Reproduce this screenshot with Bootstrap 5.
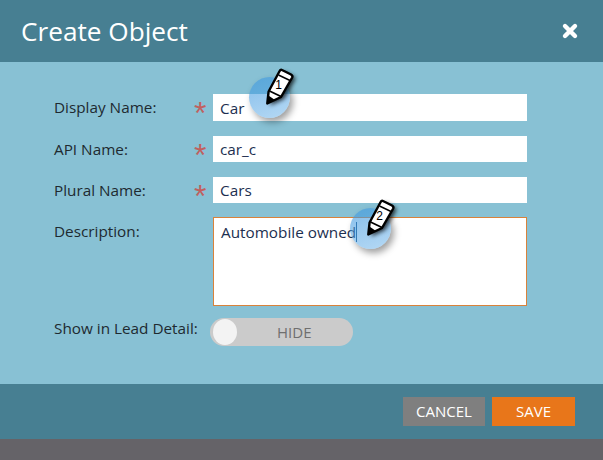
<!DOCTYPE html>
<html lang="en">
<head>
<meta charset="utf-8">
<title>Create Object</title>
<link href="https://cdn.jsdelivr.net/npm/bootstrap@5.3.0/dist/css/bootstrap.min.css" rel="stylesheet">
<style>
html,body{margin:0;height:460px;overflow:hidden;background:#656368;font-family:"Open Sans",sans-serif}
.dlg{position:relative;width:603px;height:439px;background:#88c1d4;color:#1e2a30}
.dlg-head{height:62px;background:#477f92;padding:0 24px 0 21px;color:#fff}
.dlg-title{font-size:26.2px;line-height:1;font-weight:400;margin:0}
.dlg-body{height:322px;padding:32px 0 0 54px}
.dlg-foot{height:55px;background:#477f92;padding:13px 28px 0 0;gap:7px}
.frow{height:27px;margin-bottom:15px}
.frow.r3{height:26px;margin-bottom:14px}
.frow.r2{height:26px;margin-bottom:15px}
.frow.r4{height:89px;margin-bottom:12px}
.frow.r4 .flabel{line-height:29px}
.flabel{width:139px;font-size:15.3px;line-height:27px;color:#1e2a30}
.req{width:20px;font-size:32px;line-height:38px;height:27px;color:#c0605f;font-family:"Liberation Sans",sans-serif;padding-left:1px}
.finput{width:314px;height:100%;border:0;border-radius:0;background:#fff;padding:0 7px;font-family:inherit;font-size:15.3px;color:#1c2f50;outline:0}
.farea{border:1px solid #d9823a;padding:4px 6px 4px 7px;line-height:20px}
.caret-mark{border-right:1px solid #1c4f80}
.tgl-label{width:156px;font-size:15.3px;line-height:21px}
.tgl{width:143px;height:28px;background:#cbcbcb;border-radius:14px}
.tgl-knob{width:24px;height:26px;margin:1px 0 1px 3px;background:#f3f3f3;border-radius:50%}
.tgl-text{font-size:15px;color:#6f6f6f;padding-left:40px}
.act{width:82px;height:29px;border:0;border-radius:0;color:#fff;font-size:15px;padding:0;line-height:29px;font-family:inherit}
.act-c{background:#7f7f7f}
.act-s{background:#e8761a;width:83px}
.act:hover{color:#fff}
.act-c:hover{background:#7f7f7f}
.act-s:hover{background:#e8761a}
.xbtn{width:18px;height:18px;display:block}
.pin{position:absolute;width:60px;height:70px;pointer-events:none}
.pin svg{position:relative;display:block;overflow:visible}
.pin-dot{position:absolute;left:0;top:10px;width:41px;height:41px;border-radius:50%;background:linear-gradient(160deg,rgba(60,150,222,.62),rgba(90,170,232,.45));box-shadow:3px 4px 7px rgba(0,0,0,.38)}
.pin-text{font-family:"Liberation Sans",sans-serif;font-size:12px;fill:#000}
.p1{left:249px;top:67px}
.p2{left:350px;top:198px}
</style>
</head>
<body>
<div class="dlg">
  <div class="dlg-head d-flex align-items-center justify-content-between">
    <h1 class="dlg-title">Create Object</h1>
    <svg class="xbtn" viewBox="0 0 18 18" aria-label="Close"><path d="M4 4 L14 14 M14 4 L4 14" stroke="#fff" stroke-width="4.4" stroke-linecap="round"/></svg>
  </div>
  <form class="dlg-body">
    <div class="frow d-flex">
      <div class="flabel">Display Name:</div><div class="req">*</div>
      <input class="finput" value="Car" aria-label="Display Name">
    </div>
    <div class="frow r2 d-flex">
      <div class="flabel">API Name:</div><div class="req">*</div>
      <input class="finput" value="car_c" aria-label="API Name">
    </div>
    <div class="frow r3 d-flex">
      <div class="flabel">Plural Name:</div><div class="req">*</div>
      <input class="finput" value="Cars" aria-label="Plural Name">
    </div>
    <div class="frow r4 d-flex">
      <div class="flabel">Description:</div><div class="req"></div>
      <div class="finput farea"><span class="caret-mark">Automobile owned</span></div>
    </div>
    <div class="d-flex">
      <div class="tgl-label">Show in Lead Detail:</div>
      <div class="tgl d-flex align-items-center">
        <div class="tgl-knob"></div><span class="tgl-text">HIDE</span>
      </div>
    </div>
  </form>
  <div class="dlg-foot d-flex justify-content-end align-items-start">
    <button type="button" class="btn act act-c">CANCEL</button>
    <button type="button" class="btn act act-s">SAVE</button>
  </div>

  <div class="pin p1">
    <div class="pin-dot"></div>
    <svg width="60" height="70" viewBox="0 0 60 70">
      <defs>
        <filter id="sh" x="-50%" y="-50%" width="200%" height="200%"><feGaussianBlur stdDeviation="2"/></filter>
        <g id="pencil">
          <path d="M33 3 L42 7.5 Q44 8.8 43.2 10.5 L32 30 L18.3 36.5 L19.6 24.5 L30.5 4.2 Q31.5 2.4 33 3Z" fill="#000" opacity=".75" filter="url(#sh)" transform="translate(3 2)"/>
          <path d="M33 3 L42 7.5 Q44 8.8 43.2 10.5 L32 30 L18.3 36.5 L19.6 24.5 L30.5 4.2 Q31.5 2.4 33 3Z" fill="#fff" stroke="#000" stroke-width="2.4" stroke-linejoin="round"/>
          <path d="M29.5 8 L41 13.5" stroke="#000" stroke-width="1.5"/>
          <path d="M20.5 24 L32 29.5" stroke="#000" stroke-width="1.8"/>
          <path d="M19.4 28.5 L26 33 L18.3 36.5Z" fill="#000"/>
        </g>
      </defs>
      <use href="#pencil"/>
      <text class="pin-text" x="29.5" y="22" text-anchor="middle">1</text>
    </svg>
  </div>
  <div class="pin p2">
    <div class="pin-dot"></div>
    <svg width="60" height="70" viewBox="0 0 60 70">
      <use href="#pencil"/>
      <text class="pin-text" x="29.5" y="22" text-anchor="middle">2</text>
    </svg>
  </div>
</div>
<script src="https://cdn.jsdelivr.net/npm/bootstrap@5.3.0/dist/js/bootstrap.bundle.min.js"></script>
</body>
</html>
